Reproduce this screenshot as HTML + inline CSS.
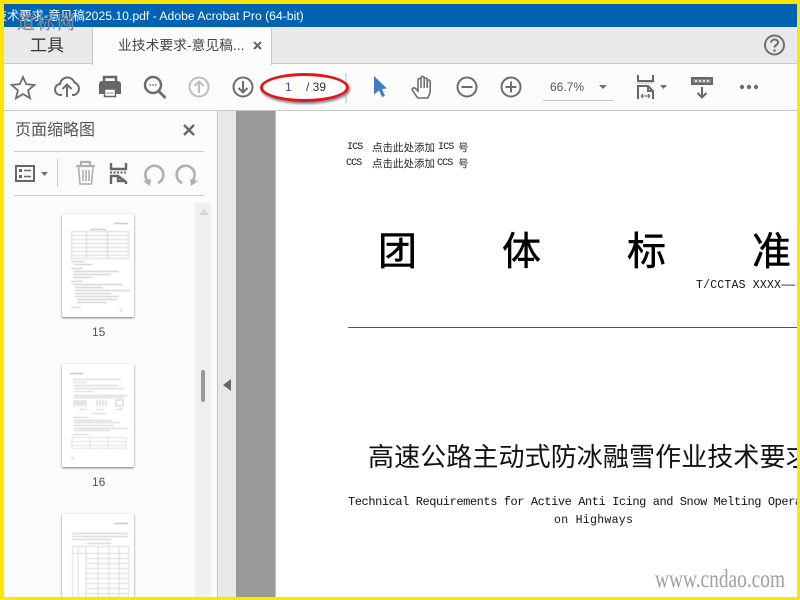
<!DOCTYPE html>
<html lang="zh"><head><meta charset="utf-8"><style>
*{box-sizing:border-box}
html,body{margin:0;padding:0;width:800px;height:600px;overflow:hidden;background:#fff}
body{position:relative;font-family:"Liberation Sans","Noto Sans CJK SC",sans-serif}
.a{position:absolute;white-space:nowrap}
.m{font-family:"Liberation Mono","Noto Sans CJK SC",monospace;color:#111}
.s{font-size:10px;letter-spacing:-.9px;line-height:13px}
.c{font-family:"Noto Sans CJK SC",sans-serif;color:#222;font-size:10.5px;line-height:14px}
.b{font-size:39px;line-height:50px;color:#000;-webkit-text-stroke:.5px #000}
svg{position:absolute;overflow:visible}
.th{position:absolute;left:62px;width:72px;background:#fff;box-shadow:0 1px 2px #777;overflow:hidden}
.th svg{filter:blur(.45px)}
</style></head><body>
<div class="a" style="left:4px;top:64px;width:793px;height:47px;background:#fcfcfc"></div>
<div class="a" style="left:4px;top:4px;width:793px;height:23px;background:#0063b1"></div>
<div class="a" style="left:4px;top:4px;width:793px;height:23px;overflow:hidden"><span class="a" style="left:-9.300px;top:2px;color:#fff;font-size:12.300px;line-height:20px">技术要求-意见稿<span style="font-size:12.200px">2025.10.pdf - Adobe Acrobat Pro (64-bit)</span></span></div>
<div class="a" style="left:4px;top:27px;width:793px;height:37px;background:#e9e9e9;border-bottom:1px solid #c8c8c8"></div>
<div class="a" style="left:92px;top:28px;width:180px;height:37px;background:#fcfcfc;border-left:1px solid #c8c8c8;border-right:1px solid #c8c8c8"></div>
<div class="a" style="left:17px;top:10px;color:#7f8a99;font-size:18px;letter-spacing:2px;font-family:'Noto Serif CJK SC',serif;line-height:24px;-webkit-text-stroke:.3px #7f8a99">道标网</div>
<div class="a" style="left:30px;top:35px;font-size:17px;color:#333;line-height:22px">工具</div>
<div class="a" style="left:118px;top:37px;font-size:13.800px;color:#444;line-height:18px">业技术要求-意见稿...</div>
<svg style="left:0;top:0" width="800" height="110" fill="none">
<path d="M254 42l7 7M261 42l-7 7" stroke="#666" stroke-width="2"/>
<circle cx="774.500" cy="45" r="9.500" stroke="#6f6f6f" stroke-width="2"/>
<path d="M771 42.500c.5-4 7-4 7 0 0 2.500-3.500 2.500-3.500 5" stroke="#6f6f6f" stroke-width="2"/><circle cx="774.500" cy="50.500" r="1.300" fill="#6f6f6f"/>
<path d="M23 77l3.200 7.200 8.200.8-6.300 5.300 2 8-7.100-4.300-7.100 4.300 2-8-6.300-5.300 8.200-.8z" stroke="#6d6d6d" stroke-width="1.800"/>
<path d="M62 95h-1a5.500 5.500 0 0 1-1-11 7.500 7.500 0 0 1 14.500-1.500 6.500 6.500 0 0 1-.5 12.500h-2M67 97V85M62.500 89l4.500-4.500 4.500 4.500" stroke="#6d6d6d" stroke-width="2"/>
<path d="M104 83v-6h12v6" stroke="#666" stroke-width="2.500"/>
<path d="M102 81h16a3 3 0 0 1 3 3v10h-22V84a3 3 0 0 1 3-3z" fill="#666"/>
<path d="M104.500 89h11v7.500h-11z" fill="#fcfcfc" stroke="#666" stroke-width="1.500"/><path d="M106.500 93h7" stroke="#888"/>
<circle cx="153" cy="85" r="8" stroke="#6d6d6d" stroke-width="2.500"/><path d="M158.500 91l7 7" stroke="#6d6d6d" stroke-width="2.800"/><path d="M149.500 85h1.500M152.300 85h1.500M155 85h1.500" stroke="#6d6d6d" stroke-width="1.500"/>
<circle cx="199" cy="87" r="9.500" stroke="#bdbdbd" stroke-width="2"/><path d="M199 93V81.500M194.500 86l4.500-4.500 4.500 4.500" stroke="#bdbdbd" stroke-width="2"/>
<circle cx="243" cy="87" r="9.500" stroke="#6d6d6d" stroke-width="2"/><path d="M243 81v11.500M238.500 88l4.500 4.500 4.500-4.500" stroke="#6d6d6d" stroke-width="2"/>
<path d="M346 73v30" stroke="#bbb"/>
<path d="M374 76l13 12.500-5 .5 3 7-3 1-3-6.500-5 4z" fill="#3d7fc4"/>
<path d="M418 98c-2-2-3.500-5-5.500-7.500-1.300-2 1.200-3.500 3-2l2.500 2.500V80c0-2 3-2 3 0v-2c0-2 3.200-2 3.200 0v1.500c0-2 3-2 3 0v2c0-2 3-2 3 0v9c0 3-1 5-2.500 7.500zM421 80v8M424.200 79.500v8.500M427.200 81v7" stroke="#6d6d6d" stroke-width="1.600"/>
<circle cx="467" cy="87" r="9.500" stroke="#6d6d6d" stroke-width="2"/><path d="M461.500 87h11" stroke="#6d6d6d" stroke-width="2"/>
<circle cx="511" cy="87" r="9.500" stroke="#6d6d6d" stroke-width="2"/><path d="M505.500 87h11M511 81.500v11" stroke="#6d6d6d" stroke-width="2"/>
<path d="M543 100.500h71" stroke="#c8c8c8"/>
<path d="M599 85h8l-4 4z" fill="#707070"/>
<path d="M638 75v6h15v-6" stroke="#666" stroke-width="2"/><path d="M637 83h17" stroke="#ddd" stroke-width="2"/>
<path d="M638 99V86h10l5 5v8" stroke="#666" stroke-width="2"/><path d="M647 86h2v4h4v2h-6z" fill="#666"/><path d="M641 96h9M641 96l2-2M641 96l2 2M650 96l-2-2M650 96l-2 2" stroke="#666"/>
<path d="M660 85h7l-3.500 4z" fill="#707070"/>
<path d="M692 78h20v6h-20z" fill="#888" stroke="#666" stroke-width="2"/><path d="M695 81h2M699 81h2M703 81h2M707 81h2" stroke="#fff" stroke-width="1.500"/>
<path d="M702 87v10M697.500 93l4.500 4.500 4.500-4.500" stroke="#666" stroke-width="2"/>
<circle cx="742" cy="87" r="2.200" fill="#6d6d6d"/><circle cx="749" cy="87" r="2.200" fill="#6d6d6d"/><circle cx="756" cy="87" r="2.200" fill="#6d6d6d"/>
</svg>
<div class="a" style="left:285px;top:79px;font-size:12px;color:#53468a;line-height:16px">1</div>
<div class="a" style="left:306px;top:79px;font-size:12px;color:#333;line-height:16px">/ 39</div>
<div class="a" style="left:550px;top:79px;font-size:12px;color:#555;line-height:16px">66.7%</div>
<div class="a" style="left:260px;top:73px;width:89px;height:29px;border:3px solid #e01818;border-radius:50%;box-shadow:1px 2px 2px #888"></div>
<div class="a" style="left:4px;top:110px;width:793px;height:1px;background:#c8c8c8"></div>

<div class="a" style="left:4px;top:111px;width:214px;height:486px;background:#fbfbfb;border-right:1px solid #c4c4c4"></div>
<div class="a" style="left:15px;top:120px;font-size:16px;color:#555;line-height:22px">页面缩略图</div>
<div class="a" style="left:14px;top:151px;width:190px;height:1px;background:#ccc"></div>
<div class="a" style="left:14px;top:195px;width:190px;height:1px;background:#ccc"></div>
<div class="a" style="left:57px;top:159px;width:1px;height:28px;background:#ccc"></div>
<svg style="left:0;top:110px" width="218" height="90" fill="none">
<path d="M184 15l10 10M194 15l-10 10" stroke="#666" stroke-width="2.400"/>
<rect x="16" y="56" width="18" height="15" stroke="#666" stroke-width="2"/><path d="M19 60.500h3M19 66.500h3" stroke="#666" stroke-width="3"/><path d="M24 60.500h7M24 66.500h7" stroke="#666" stroke-width="1.500"/>
<path d="M41 62h7l-3.500 4z" fill="#707070"/>
<path d="M76 56h19M81 55v-3h9v3" stroke="#b0b0b0" stroke-width="2.200"/><path d="M78.500 57l1.500 17h11.500L93 57M83 60v11M86 60v11M89 60v11" stroke="#b0b0b0" stroke-width="1.600"/>
<path d="M111 53v6h15v-6" stroke="#666" stroke-width="2.400"/><path d="M110 62.500h17" stroke="#666" stroke-width="2" stroke-dasharray="2 1.500"/>
<path d="M111 74v-8h7l8 6v2M118 66v5h7" stroke="#666" stroke-width="2.400"/>
<path d="M149 72a9 9 0 1 1 9 1" stroke="#b0b0b0" stroke-width="2.600"/><path d="M143 71l8-2-1 7z" fill="#b0b0b0"/>
<path d="M191 72a9 9 0 1 0-9 1" stroke="#b0b0b0" stroke-width="2.600"/><path d="M198 71l-8-2 1 7z" fill="#b0b0b0"/>
</svg>
<div class="a" style="left:195px;top:203px;width:16px;height:394px;background:#f0f0f0"></div>
<svg style="left:198px;top:207px" width="12" height="10"><path d="M1 8l5-6 5 6z" fill="#d6d6d6"/></svg>
<div class="a" style="left:201px;top:370px;width:4px;height:32px;background:#999;border-radius:2px"></div>

<div class="th" style="top:214px;height:103px">
<svg style="left:0;top:0" width="72" height="103" fill="none" stroke="#d8d8d8">
<path d="M52 9.500h14" stroke="#aaa"/>
<path d="M28 15.500h16" stroke="#bbb"/>
<path d="M9.500 17.500h57v27h-57zM9.500 21.500h57M9.500 25.500h57M9.500 29.500h57M9.500 33.500h57M9.500 37.500h57M9.500 41.500h57M24.500 17.500v27M45.500 17.500v27"/>
<path d="M9 47.500h14M12 50.500h18M9 54.500h12M11 57.500h46M11 60.500h38M11 63.500h20M9 67.500h12M11 70.500h50M13 73.500h28M13 76.500h55M13 79.500h36M13 82.500h44M15 85.500h40M15 88.500h30" stroke="#c4c4c4"/>
<path d="M9 93.500h10M57 96.500h4" stroke="#ccc"/>
</svg>
</div>
<div class="a" style="left:92px;top:324px;font-size:12px;color:#555;line-height:16px">15</div>
<div class="th" style="top:364px;height:103px">
<svg style="left:0;top:0" width="72" height="103" fill="none" stroke="#cfcfcf">
<path d="M8 9.500h13" stroke="#aaa"/>
<path d="M11 15.500h48M11 18.500h14M12 21.500h44M12 24.500h50M12 27.500h20M12 31.500h54M12 33.500h50"/>
<path d="M12 36v6M14 36v6M16 36v6M18 36v6M20 36v6M22 36v6M24 36v6M35 36v6M38 36v6M41 36v6M44 36v6M54 36h7v6h-7z" stroke="#c8c8c8"/>
<path d="M17 45.500h7M35 45.500h7M54 45.500h7M30 49.500h14M11 53.500h16M12 56.500h38M12 58.500h46M12 61.500h40M12 64.500h54M12 66.500h36M11 70.500h16" />
<path d="M10 73.500h54v11h-54zM10 77.500h54M10 81.500h54M28 73.500v11M46 73.500v11" stroke="#e0e0e0"/>
<path d="M9 94.500h3" stroke="#bbb"/>
</svg>
</div>
<div class="a" style="left:92px;top:474px;font-size:12px;color:#555;line-height:16px">16</div>
<div class="th" style="top:514px;height:83px">
<svg style="left:0;top:0" width="72" height="83" fill="none" stroke="#c8c8c8">
<path d="M52 9.500h14" stroke="#aaa"/>
<path d="M10 19.500h56M10 22.500h56M10 25.500h40M25 29.500h24"/>
<path d="M10.500 32.500h56v51h-56zM10.500 39.500h56M24 44.500h42M24 49.500h42M24 54.500h42M24 59.500h42M24 64.500h42M24 69.500h42M24 74.500h42M24 79.500h42M16 32.500v51M24 32.500v51M36 32.500v51M47 32.500v51M57 32.500v51" stroke="#dadada"/>
</svg>
</div>

<div class="a" style="left:218px;top:111px;width:18px;height:486px;background:#e8e8e8"></div>
<svg style="left:222px;top:378px" width="10" height="14"><path d="M9 1v12L1 7z" fill="#666"/></svg>
<div class="a" style="left:236px;top:111px;width:40px;height:486px;background:#999"></div>
<div class="a" style="left:275px;top:111px;width:1px;height:486px;background:#c4c4c4"></div>

<div class="a" style="left:276px;top:111px;width:521px;height:486px;background:#fff;overflow:hidden">
<div class="a m s" style="left:71px;top:30px">ICS</div>
<div class="a c" style="left:96px;top:30px">点击此处添加</div>
<div class="a m s" style="left:162px;top:30px">ICS</div>
<div class="a c" style="left:182px;top:30px">号</div>
<div class="a m s" style="left:70px;top:46px">CCS</div>
<div class="a c" style="left:96px;top:46px">点击此处添加</div>
<div class="a m s" style="left:161px;top:46px">CCS</div>
<div class="a c" style="left:182px;top:46px">号</div>
<div class="a b" style="left:102px;top:117px">团</div>
<div class="a b" style="left:226px;top:117px">体</div>
<div class="a b" style="left:351px;top:117px">标</div>
<div class="a b" style="left:476px;top:117px">准</div>
<div class="a m" style="left:420px;top:167px;font-size:11.500px;line-height:16px;letter-spacing:.2px">T/CCTAS XXXX——</div>
<div class="a" style="left:72px;top:216px;width:449px;height:1px;background:#555"></div>
<div class="a" style="left:92px;top:331px;font-size:26px;letter-spacing:.1px;line-height:30px;color:#111">高速公路主动式防冰融雪作业技术要求</div>
<div class="a m" style="left:72px;top:383px;font-size:12px;letter-spacing:-.43px;line-height:17px">Technical Requirements for Active Anti Icing and Snow Melting Operations</div>
<div class="a m" style="left:278px;top:401px;font-size:11.500px;line-height:17px;letter-spacing:.3px">on Highways</div>
<div class="a" style="left:379px;top:455px;font-family:'Liberation Serif',serif;font-size:25px;line-height:28px;color:#a0a0a0;transform:scaleX(.775);transform-origin:left">www.cndao.com</div>
</div>

<div class="a" style="left:0;top:0;width:800px;height:3.500px;background:#ffe600"></div>
<div class="a" style="left:0;top:597px;width:800px;height:3px;background:#ffe600"></div>
<div class="a" style="left:0;top:0;width:3.500px;height:600px;background:#ffe600"></div>
<div class="a" style="left:797px;top:0;width:3px;height:600px;background:#ffe600"></div>
</body></html>
